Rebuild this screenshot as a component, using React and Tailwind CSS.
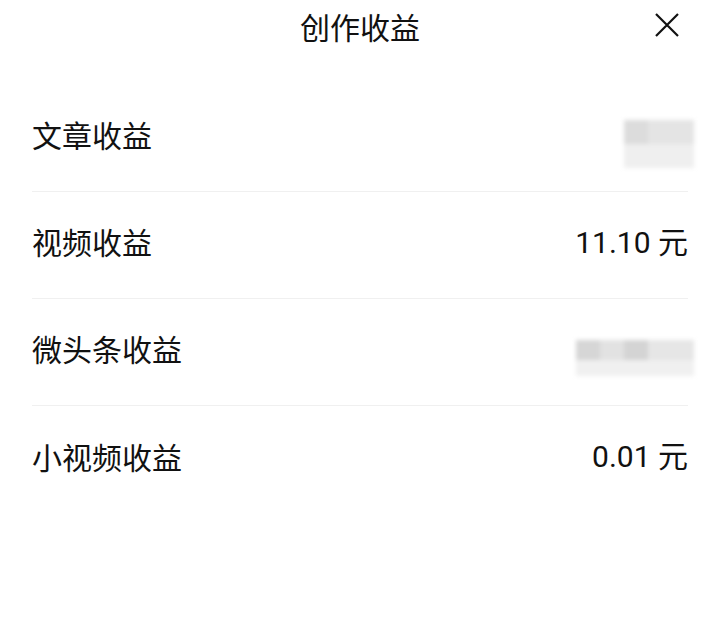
import React from 'react'

const rows = [
  { label: '文章收益', value: null, blur: 'short' },
  { label: '视频收益', value: '11.10 元' },
  { label: '微头条收益', value: null, blur: 'long' },
  { label: '小视频收益', value: '0.01 元' },
]

function Blurred({ kind }) {
  if (kind === 'short') {
    return (
      <div className="mr-[-6px] mt-[19px] flex w-[70px] flex-col blur-[2px]">
        <div className="flex h-[24px]">
          <div className="w-[24px] bg-[#dcdcdc]" />
          <div className="flex-1 bg-[#e4e4e4]" />
        </div>
        <div className="h-[24px] bg-[#efefef]" />
      </div>
    )
  }
  return (
    <div className="mr-[-6px] mt-[20px] flex w-[118px] flex-col blur-[2px]">
      <div className="flex h-[20px]">
        <div className="w-[24px] bg-[#d6d6d6]" />
        <div className="w-[24px] bg-[#e2e2e2]" />
        <div className="w-[24px] bg-[#d4d4d4]" />
        <div className="flex-1 bg-[#e6e6e6]" />
      </div>
      <div className="h-[16px] bg-[#f0f0f0]" />
    </div>
  )
}

export default function App() {
  return (
    <div
      className="h-[633px] w-[720px] bg-white text-[#111]"
      style={{ fontFamily: '"Noto Sans CJK SC", Roboto, sans-serif' }}
    >
      {/* Header */}
      <div className="relative flex h-[52px] items-center justify-center">
        <h1 className="text-[30px] leading-none">创作收益</h1>
        <button className="absolute right-[41px] top-[13px]">
          <svg width="24" height="24" viewBox="0 0 24 24" fill="none" stroke="#111" strokeWidth="2.2">
            <path d="M1 1 L23 23 M23 1 L1 23" />
          </svg>
        </button>
      </div>

      {/* Rows */}
      <div className="mt-[33px] px-[32px]">
        {rows.map((r, i) => (
          <div
            key={r.label}
            className={`flex h-[107px] items-center justify-between pb-[8px] ${i < rows.length - 1 ? 'border-b border-[#f0f0f0]' : ''}`}
          >
            <span className="text-[30px] leading-none">{r.label}</span>
            {r.value ? (
              <span className="text-[30px] leading-none" style={{ fontFamily: 'Roboto, "Noto Sans CJK SC", sans-serif' }}>
                {r.value.split(' ')[0]}{' '}
                <span style={{ fontFamily: '"Noto Sans CJK SC", sans-serif' }}>元</span>
              </span>
            ) : (
              <Blurred kind={r.blur} />
            )}
          </div>
        ))}
      </div>
    </div>
  )
}
